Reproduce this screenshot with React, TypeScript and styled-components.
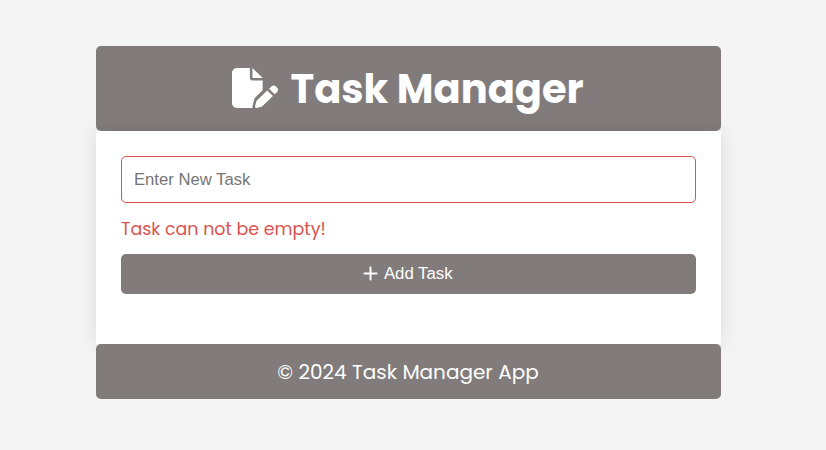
import React from "react";
import styled, { createGlobalStyle } from "styled-components";

const GlobalStyle = createGlobalStyle`
  * { box-sizing: border-box; }
  body {
    margin: 0;
    background: #f4f4f4;
    font-family: Poppins, "Open Sans", "Liberation Sans", sans-serif;
  }
`;

const Page = styled.div`
  width: 625px;
  margin: 46px 0 0 96px;
`;

const Header = styled.header`
  height: 85px;
  display: flex;
  align-items: center;
  justify-content: center;
  gap: 12.5px;
  padding: 1px 1.500px 0 0;
  background: #817c7b;
  color: #fff;
  border-radius: 5px;
`;

const HeaderIcon = styled.svg`
  width: 46px;
  height: 40px;
  margin-bottom: 2px;
  flex: none;
`;

const HeaderTitle = styled.h1`
  margin: 0;
  width: 293px;
  font-size: 40px;
  line-height: 60px;
  font-weight: 700;
  white-space: nowrap;
`;

const Card = styled.main`
  height: 213px;
  padding: 25px;
  background: #fff;
  box-shadow: 0 0 19px rgba(0, 0, 0, 0.1);
`;

const TaskInput = styled.input`
  display: block;
  width: 100%;
  height: 47px;
  padding: 0 12px;
  border: 1px solid #d9534f;
  border-radius: 5px;
  outline: none;
  font: 16.667px "Liberation Sans", Arial, sans-serif;
  &::placeholder { color: #757575; }
`;

const ErrorText = styled.p`
  margin: 13px 0 12px;
  height: 26px;
  line-height: 26px;
  font-size: 17.45px;
  color: #d9534f;
  white-space: nowrap;
`;

const AddButton = styled.button`
  display: flex;
  align-items: center;
  justify-content: center;
  gap: 5.5px;
  width: 100%;
  height: 40px;
  padding: 0 1px 1px 0;
  border: 0;
  border-radius: 5px;
  background: #817c7b;
  color: #fff;
  font: 16.8px "Liberation Sans", Arial, sans-serif;
`;

const PlusIcon = styled.svg`
  width: 15px;
  height: 15px;
`;

const Footer = styled.footer`
  position: relative;
  height: 55px;
  padding: 1px 1px 0 0;
  line-height: 54px;
  text-align: center;
  background: #817c7b;
  color: #fff;
  border-radius: 5px;
  font-size: 20px;
`;

export default function App() {
  return (
    <>
      <GlobalStyle />
      <Page>
        <Header>
          <HeaderIcon viewBox="0 0 576 512" preserveAspectRatio="none" fill="currentColor">
            <path d="M0 64C0 28.7 28.7 0 64 0H224V128c0 17.700 14.300 32 32 32H384V285.700l-86.800 86.800c-10.300 10.300-17.500 23.100-21 37.200l-18.700 74.900c-2.300 9.200-1.800 18.800 1.300 27.500H64c-35.300 0-64-28.700-64-64V64zm384 64H256V0L384 128zM549.800 235.700l14.400 14.400c15.600 15.600 15.600 40.900 0 56.600l-29.400 29.400-71-71 29.400-29.400c15.600-15.600 40.900-15.600 56.600 0zM311.900 417L441.100 287.800l71 71L382.900 487.900c-4.100 4.100-9.200 7-14.900 8.400l-60.100 15c-5.500 1.400-11.200-.2-15.200-4.200s-5.600-9.700-4.200-15.200l15-60.100c1.400-5.600 4.300-10.800 8.400-14.900z" />
          </HeaderIcon>
          <HeaderTitle>Task Manager</HeaderTitle>
        </Header>
        <Card>
          <TaskInput placeholder="Enter New Task" />
          <ErrorText>Task can not be empty!</ErrorText>
          <AddButton>
            <PlusIcon viewBox="0 0 15 15" stroke="currentColor" strokeWidth="2" strokeLinecap="round">
              <path d="M7.500 1.500V13.500M1.500 7.500H13.500" />
            </PlusIcon>
            Add Task
          </AddButton>
        </Card>
        <Footer>© 2024 Task Manager App</Footer>
      </Page>
    </>
  );
}
